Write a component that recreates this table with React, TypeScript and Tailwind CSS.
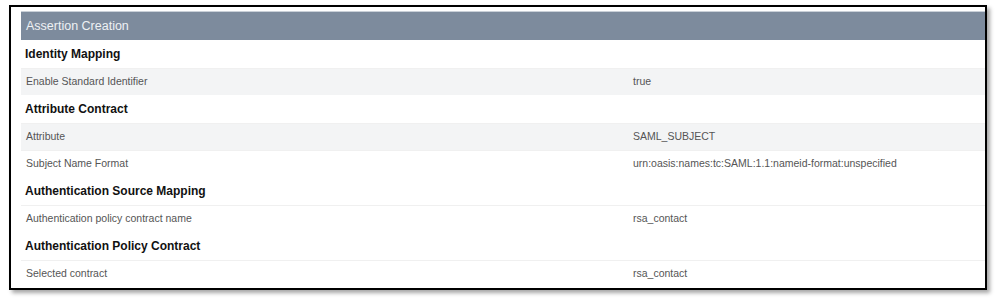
const sections = [
  {
    title: "Identity Mapping",
    rows: [{ label: "Enable Standard Identifier", value: "true" }],
  },
  {
    title: "Attribute Contract",
    rows: [
      { label: "Attribute", value: "SAML_SUBJECT" },
      { label: "Subject Name Format", value: "urn:oasis:names:tc:SAML:1.1:nameid-format:unspecified" },
    ],
  },
  {
    title: "Authentication Source Mapping",
    rows: [{ label: "Authentication policy contract name", value: "rsa_contact" }],
  },
  {
    title: "Authentication Policy Contract",
    rows: [{ label: "Selected contract", value: "rsa_contact" }],
  },
];

const striped = ["Identity Mapping", "Attribute Contract"];

export default function App() {
  return (
    <div className="w-[998px] h-[304px] bg-white pt-[5px] pl-[9px] font-['Liberation_Sans',Arial,sans-serif]">
      <div className="w-[978px] h-[285px] border-2 border-black bg-white pt-[4px] pl-[10px] shadow-[3px_3px_4px_rgba(0,0,0,0.35)]">
        <div className="h-[29px] bg-[#7d8b9d] flex items-center px-[5px] text-[12.5px] text-[#eef1f4] border-t border-[#c9d0d8]">
          Assertion Creation
        </div>
        {sections.map((s) => (
          <div key={s.title}>
            <div className="h-[27.5px] flex items-center px-[4px] text-[12px] font-bold text-[#111]">
              {s.title}
            </div>
            {s.rows.map((r, i) => (
              <div
                key={r.label}
                className={`h-[27.5px] flex items-center px-[5px] text-[10.5px] text-[#555] border-t border-[#f0f0f0] ${
                  i === 0 && striped.includes(s.title) ? "bg-[#f3f4f5]" : "bg-white"
                }`}
              >
                <span className="w-[607px] shrink-0">{r.label}</span>
                <span>{r.value}</span>
              </div>
            ))}
          </div>
        ))}
      </div>
    </div>
  );
}
